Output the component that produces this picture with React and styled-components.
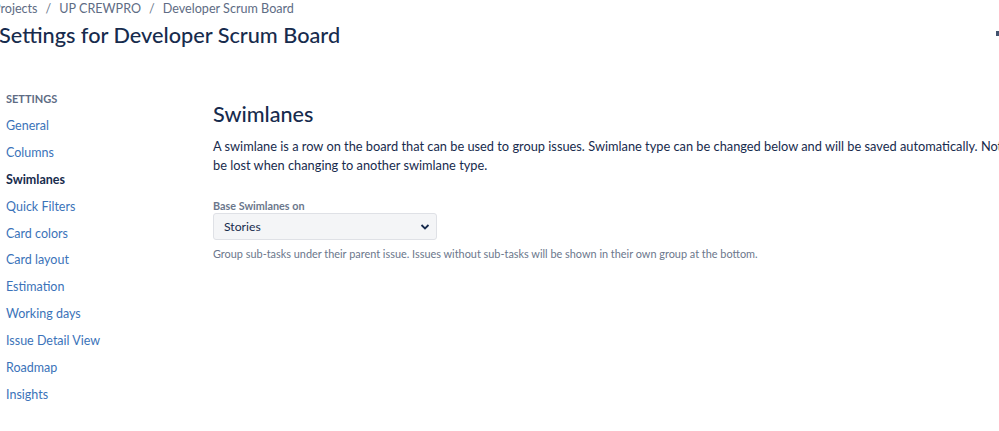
import React from "react";
import styled, { createGlobalStyle } from "styled-components";

const GlobalStyle = createGlobalStyle`
  html, body {
    margin: 0;
    padding: 0;
    background: #ffffff;
    overflow: hidden;
  }
  body {
    font-family: Lato, "Noto Sans", sans-serif;
    color: #172b4d;
  }
`;

const Page = styled.div`
  width: 1120px;
  height: 431px;
  position: relative;
`;

const Header = styled.header`
  padding-top: 1px;
`;

const Breadcrumbs = styled.nav`
  display: flex;
  align-items: center;
  margin-left: -7px;
  height: 16px;
  font-size: 12.6px;
  color: #5e6c84;
  line-height: 16px;
`;

const Crumb = styled.span`
  white-space: nowrap;
`;

const Sep = styled.span`
  padding: 0 8px;
  color: #6b778c;
`;

const Title = styled.h1`
  margin: 4px 0 0 -1px;
  font-size: 21.7px;
  font-weight: 500;
  line-height: 28px;
  color: #172b4d;
`;

const Edge = styled.span`
  position: absolute;
  left: 996px;
  top: 31px;
  width: 3px;
  height: 5px;
  background: #42526e;
`;

const Body = styled.div`
  display: flex;
  margin-top: 42px;
`;

const Sidebar = styled.aside`
  width: 213px;
  flex-shrink: 0;
  padding-left: 6px;
  box-sizing: border-box;
`;

const SideHeading = styled.div`
  font-size: 11px;
  font-weight: 700;
  color: #5e6c84;
  text-transform: uppercase;
  line-height: 16px;
  margin-bottom: 6px;
`;

const NavItem = styled.a`
  display: block;
  height: 26.9px;
  line-height: 26.9px;
  font-size: 12.5px;
  color: ${(p) => (p.$active ? "#172b4d" : "#3b73b9")};
  font-weight: ${(p) => (p.$active ? 700 : 400)};
  text-decoration: none;
  white-space: nowrap;
`;

const Main = styled.main`
  flex: 1;
  padding-top: 11px;
`;

const SectionTitle = styled.h2`
  margin: 0;
  font-size: 21.6px;
  font-weight: 500;
  line-height: 24px;
  color: #172b4d;
`;

const Description = styled.p`
  margin: 11px 0 0;
  font-size: 12.8px;
  line-height: 19px;
  color: #172b4d;
  white-space: nowrap;
`;

const Field = styled.div`
  margin-top: 24px;
`;

const Label = styled.label`
  display: block;
  font-size: 10.8px;
  font-weight: 700;
  color: #6b778c;
  line-height: 14px;
`;

const SelectBox = styled.div`
  position: relative;
  width: 224px;
  height: 27px;
  box-sizing: border-box;
  background: #f4f5f7;
  border: 1px solid #dfe1e6;
  border-radius: 3px;
  display: flex;
  align-items: center;
  padding-left: 10px;
  font-size: 12.2px;
  color: #172b4d;
`;

const Chevron = styled.svg`
  position: absolute;
  right: 6px;
  top: 9px;
`;

const Help = styled.div`
  margin-top: 7px;
  font-size: 10.9px;
  line-height: 14px;
  color: #6b778c;
  white-space: nowrap;
`;

const navItems = [
  "General",
  "Columns",
  "Swimlanes",
  "Quick Filters",
  "Card colors",
  "Card layout",
  "Estimation",
  "Working days",
  "Issue Detail View",
  "Roadmap",
  "Insights",
];

export default function App() {
  return (
    <>
      <GlobalStyle />
      <Page>
        <Header>
          <Breadcrumbs>
            <Crumb>Projects</Crumb>
            <Sep>/</Sep>
            <Crumb>UP CREWPRO</Crumb>
            <Sep>/</Sep>
            <Crumb>Developer Scrum Board</Crumb>
          </Breadcrumbs>
          <Title>Settings for Developer Scrum Board</Title>
          <Edge />
        </Header>
        <Body>
          <Sidebar>
            <SideHeading>Settings</SideHeading>
            {navItems.map((item) => (
              <NavItem key={item} href="#" $active={item === "Swimlanes"}>
                {item}
              </NavItem>
            ))}
          </Sidebar>
          <Main>
            <SectionTitle>Swimlanes</SectionTitle>
            <Description>
              A swimlane is a row on the board that can be used to group issues.
              Swimlane type can be changed below and will be saved automatically.
              Note that any changes will
              <br />
              be lost when changing to another swimlane type.
            </Description>
            <Field>
              <Label>Base Swimlanes on</Label>
              <SelectBox>
                Stories
                <Chevron width="10" height="8" viewBox="0 0 10 8">
                  <path d="M1.5 2 L5 5.5 L8.5 2" fill="none" stroke="#172b4d" strokeWidth="1.8" />
                </Chevron>
              </SelectBox>
              <Help>
                Group sub-tasks under their parent issue. Issues without sub-tasks will be shown in their own group at the bottom.
              </Help>
            </Field>
          </Main>
        </Body>
      </Page>
    </>
  );
}
